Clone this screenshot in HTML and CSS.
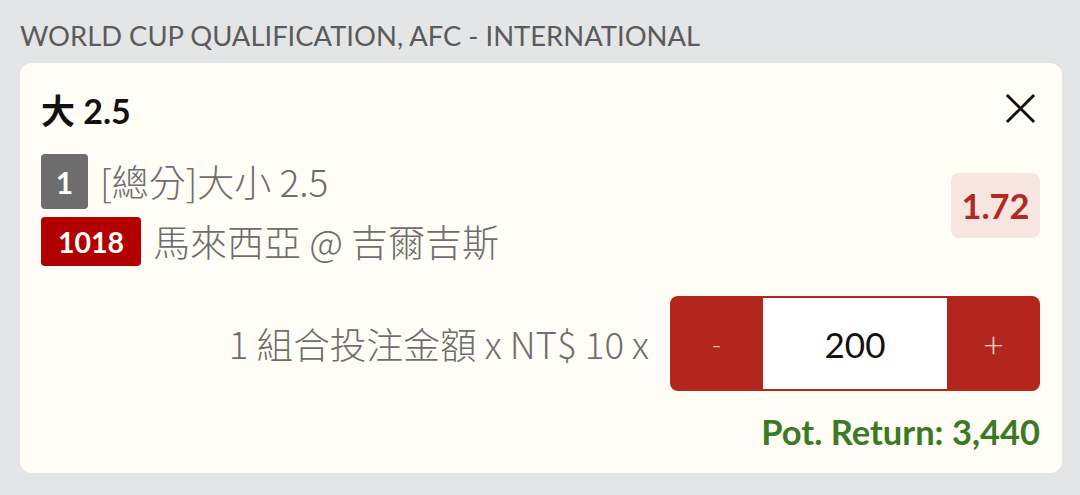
FILE: index.html
```html
<!DOCTYPE html>
<html>
<head>
<meta charset="utf-8">
<link rel="stylesheet" href="styles.css">
</head>
<body>
<div class="page">
  <div class="league">WORLD CUP QUALIFICATION, AFC - INTERNATIONAL</div>
  <div class="card">
    <div class="head">
      <div class="title">大 2.5</div>
      <svg class="close" viewBox="0 0 32 32" width="32" height="32"><path d="M2 2 L30 30 M30 2 L2 30" stroke="#111" stroke-width="3" fill="none"/></svg>
    </div>
    <div class="sel">
      <div class="sel-info">
        <div class="line"><span class="badge gray">1</span><span class="txt">[總分]大小 2.5</span></div>
        <div class="line"><span class="badge red">1018</span><span class="txt">馬來西亞 @ 吉爾吉斯</span></div>
      </div>
      <div class="odds">1.72</div>
    </div>
    <div class="stake">
      <div class="stake-label">1 組合投注金額 x NT$ 10 x</div>
      <div class="stepper">
        <div class="btn minus">-</div>
        <div class="val">200</div>
        <div class="btn plus">+</div>
      </div>
    </div>
    <div class="ret">Pot. Return: 3,440</div>
  </div>
</div>
</body>
</html>
```
FILE: styles.css
```css
html, body { margin: 0; padding: 0; }
body {
  background: #e4e5e7;
  font-family: Lato, "Noto Sans CJK TC", sans-serif;
  width: 1080px;
  height: 495px;
  overflow: hidden;
}
.page { padding: 18px 18px 0 20px; }
.league {
  font-size: 27.4px;
  color: #5b5b5b;
  line-height: 36px;
  height: 45px;
}
.card {
  background: #fffdf5;
  border-radius: 12px;
  width: 1042px;
  height: 410px;
  box-sizing: border-box;
  padding: 22px 22px 0 21px;
}
.head {
  display: flex;
  justify-content: space-between;
  align-items: center;
  height: 48px;
}
.title {
  font-size: 34px;
  font-weight: 700;
  color: #111;
}
.close { width: 31px; height: 31px; margin-right: 4px; margin-top: -2px; }
.sel {
  display: flex;
  justify-content: space-between;
  align-items: center;
  margin-top: 21px;
}
.sel-info { display: flex; flex-direction: column; gap: 8px; }
.line { display: flex; align-items: center; gap: 12px; }
.badge {
  color: #fff;
  font-weight: 700;
  border-radius: 4px;
  display: flex;
  align-items: center;
  justify-content: center;
  height: 55px;
  font-size: 30px;
}
.badge.gray { background: #6d6d6d; width: 47px; }
.badge.red { background: #b20000; width: 100px; height: 49px; font-size: 28.5px; }
.txt {
  font-family: "Noto Sans CJK TC", sans-serif;
  font-weight: 300;
  font-size: 37px;
  line-height: 1.2;
  color: #6e6e6e;
}
.odds {
  background: #f6e6df;
  color: #b12a22;
  font-weight: 700;
  font-size: 34.5px;
  border-radius: 8px;
  width: 89px;
  height: 65px;
  display: flex;
  align-items: center;
  justify-content: center;
  margin-top: -10px;
}
.stake {
  display: flex;
  justify-content: flex-end;
  align-items: center;
  gap: 21px;
  margin-top: 30px;
}
.stake-label {
  font-family: "Noto Sans CJK TC", sans-serif;
  font-weight: 300;
  font-size: 36.7px;
  line-height: 1.2;
  color: #6e6e6e;
}
.stepper {
  display: flex;
  width: 370px;
  height: 95px;
  background: #b3261e;
  border-radius: 8px;
  box-sizing: border-box;
  padding: 2px 0;
}
.btn {
  width: 93px;
  color: #f3d6d3;
  font-weight: 300;
  display: flex;
  align-items: center;
  justify-content: center;
}
.btn.minus { font-size: 28px; }
.btn.plus { font-size: 36px; }
.val {
  flex: 1;
  background: #fff;
  color: #111;
  font-size: 35px;
  display: flex;
  align-items: center;
  justify-content: center;
}
.ret {
  text-align: right;
  font-size: 34.5px;
  font-weight: 700;
  color: #3b7a24;
  margin-top: 20px;
}
```
